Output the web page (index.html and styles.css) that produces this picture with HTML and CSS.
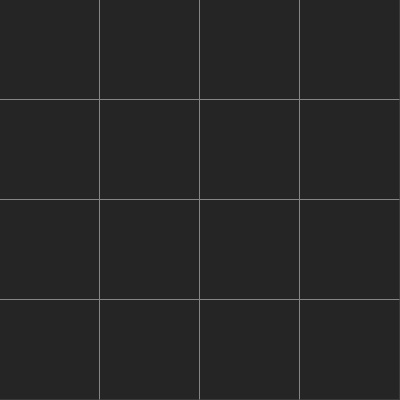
FILE: index.html
```html
<!DOCTYPE html>
<html>
<head>
<meta charset="utf-8">
<link rel="stylesheet" href="styles.css">
</head>
<body>
<div class="grid">
  <div class="cell"></div><div class="cell"></div><div class="cell"></div><div class="cell"></div>
  <div class="cell"></div><div class="cell"></div><div class="cell"></div><div class="cell"></div>
  <div class="cell"></div><div class="cell"></div><div class="cell"></div><div class="cell"></div>
  <div class="cell"></div><div class="cell"></div><div class="cell"></div><div class="cell"></div>
</div>
</body>
</html>
```
FILE: styles.css
```css
html, body {
  margin: 0;
  padding: 0;
  background: #252525;
}
.grid {
  display: grid;
  grid-template-columns: repeat(4, 100px);
  grid-template-rows: repeat(4, 100px);
  width: 400px;
  height: 400px;
}
.cell {
  background: #252525;
  border-right: 1px solid #858585;
  border-bottom: 1px solid #858585;
}
.cell:nth-child(4n) {
  border-right-color: #3a3a3a;
}
.cell:nth-child(n+13) {
  border-bottom-color: #3a3a3a;
}
```
